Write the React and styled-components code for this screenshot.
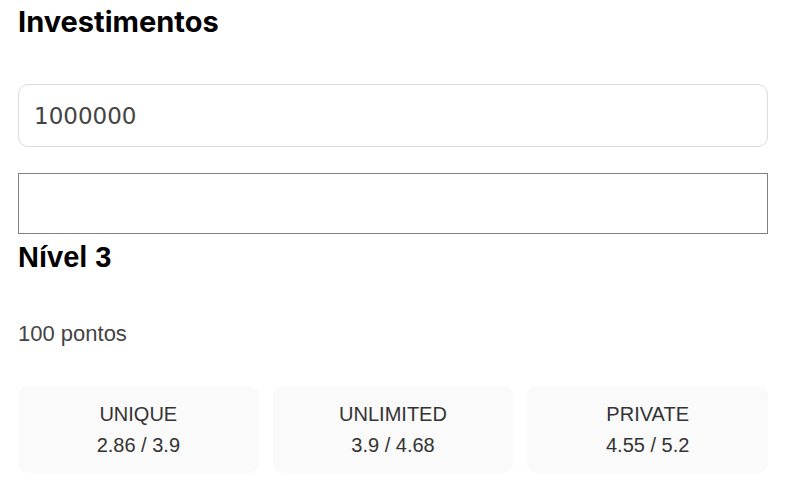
import React from 'react';
import styled, { createGlobalStyle } from 'styled-components';

const GlobalStyle = createGlobalStyle`
  * { box-sizing: border-box; }
  body {
    margin: 0;
    background: #fff;
    font-family: "Liberation Sans", Arial, sans-serif;
  }
`;

const plans = [
  { name: 'UNIQUE', value: '2.86 / 3.9' },
  { name: 'UNLIMITED', value: '3.9 / 4.68' },
  { name: 'PRIVATE', value: '4.55 / 5.2' },
];

export default function App() {
  return (
    <>
      <GlobalStyle />
      <Page>
        <Title>Investimentos</Title>
        <AmountInput defaultValue="1000000" />
        <EmptyBox />
        <Level>Nível 3</Level>
        <Points>100 pontos</Points>
        <Cards>
          {plans.map((p) => (
            <Card key={p.name}>
              <CardName>{p.name}</CardName>
              <CardValue>{p.value}</CardValue>
            </Card>
          ))}
        </Cards>
      </Page>
    </>
  );
}

const Page = styled.div`
  padding: 0 22px 0 18px;
  display: flex;
  flex-direction: column;
`;

const Title = styled.h1`
  font-family: Inter, "Liberation Sans", sans-serif;
  font-weight: 700;
  font-size: 29px;
  line-height: 34px;
  margin: 5px 0 45px;
  color: #000;
`;

const AmountInput = styled.input`
  height: 63px;
  width: 100%;
  border: 1px solid #dcdcdc;
  border-radius: 10px;
  padding: 0 15px;
  font-family: "DejaVu Sans", sans-serif;
  font-size: 23px;
  color: #444;
  outline: none;
`;

const EmptyBox = styled.div`
  margin-top: 26px;
  height: 61px;
  border: 1px solid #808080;
`;

const Level = styled.h2`
  font-family: "Liberation Sans", Arial, sans-serif;
  font-weight: 700;
  font-size: 29px;
  line-height: 34px;
  margin: 6px 0 0;
  color: #000;
`;

const Points = styled.p`
  font-size: 22px;
  line-height: 24px;
  color: #444;
  margin: 48px 0 0;
`;

const Cards = styled.div`
  margin-top: 40px;
  display: grid;
  grid-template-columns: repeat(3, 1fr);
  gap: 14px;
`;

const Card = styled.div`
  background: #fafafa;
  border-radius: 10px;
  height: 87px;
  display: flex;
  flex-direction: column;
  align-items: center;
  justify-content: center;
  gap: 9px;
  color: #333;
  font-size: 20px;
`;

const CardName = styled.div`
  line-height: 22px;
`;

const CardValue = styled.div`
  line-height: 22px;
`;
